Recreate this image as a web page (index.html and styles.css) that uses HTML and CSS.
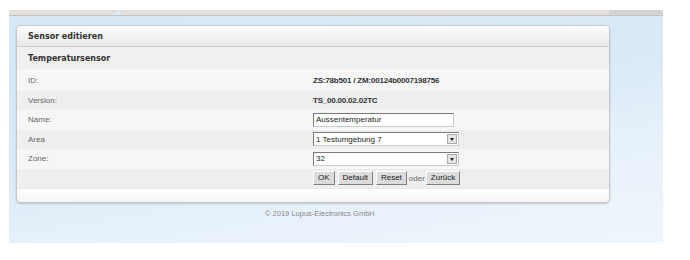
FILE: index.html
```html
<!DOCTYPE html>
<html>
<head>
<meta charset="utf-8">
<link rel="stylesheet" href="styles.css">
</head>
<body>
<div class="page">
  <div class="topbar"><span class="notch"></span><span class="topright"></span></div>
  <div class="bg">
    <div class="panel">
      <div class="ph">Sensor editieren</div>
      <div class="sub">Temperatursensor</div>
      <div class="row light"><span class="lbl">ID:</span><span class="val b">ZS:78b501 / ZM:00124b0007198756</span></div>
      <div class="row dark"><span class="lbl">Version:</span><span class="val b">TS_00.00.02.02TC</span></div>
      <div class="row light"><span class="lbl">Name:</span><span class="val"><span class="inp">Aussentemperatur</span></span></div>
      <div class="row dark"><span class="lbl">Area</span><span class="val"><span class="sel"><span class="seltxt">1 Testumgebung 7</span><span class="arr"></span></span></span></div>
      <div class="row light"><span class="lbl">Zone:</span><span class="val"><span class="sel"><span class="seltxt">32</span><span class="arr"></span></span></span></div>
      <div class="row dark"><span class="lbl"></span><span class="val btns"><span class="btn">OK</span><span class="btn">Default</span><span class="btn">Reset</span><span class="oder">oder</span><span class="btn">Zurück</span></span></div>
      <div class="pfoot"></div>
    </div>
    <div class="footer">© 2019 Lupus-Electronics GmbH</div>
  </div>
</div>
</body>
</html>
```
FILE: styles.css
```css
html, body { margin: 0; padding: 0; background: #fff; font-family: "Liberation Sans", Arial, sans-serif; }
.page { width: 654px; margin-left: 9px; padding-top: 10px; }
.topbar { height: 5px; background: #e3e0dc; border-bottom: 1px solid #c4c4c4; position: relative; }
.notch { position: absolute; left: 104px; top: 0; width: 0; height: 0; border-left: 5px solid transparent; border-right: 5px solid transparent; border-bottom: 5px solid #dcebf7; }
.topright { position: absolute; right: 0; top: 0; width: 54px; height: 5px; background: #d3d3d3; }
.bg { height: 227px; background: linear-gradient(170deg, #d6e8f6 0%, #daeaf7 45%, #e7f1fa 70%, #eff6fc 100%); padding: 9px 0 0 7px; box-sizing: border-box; }
.panel { width: 592px; border: 1px solid #c8c8c8; border-radius: 5px; background: #f2f2f2; box-shadow: 0 1px 2px rgba(0,0,0,0.18); overflow: hidden; font-size: 8px; color: #555; }
.ph { height: 21px; line-height: 21px; padding-left: 11px; font-family: "DejaVu Sans", Verdana, sans-serif; font-weight: bold; font-size: 8px; color: #333; background: linear-gradient(#fcfcfc, #e9e9e9); border-bottom: 1px solid #cfcfcf; box-sizing: border-box; }
.sub { height: 24px; line-height: 24px; padding-left: 11px; font-family: "DejaVu Sans", Verdana, sans-serif; font-weight: bold; font-size: 8px; color: #333; background: #f0f0f0; border-bottom: 1px solid #fafafa; box-sizing: border-box; }
.row { display: flex; align-items: center; height: 19.5px; padding-left: 11px; }
.light { background: #f6f6f6; }
.dark { background: #eeeeee; }
.lbl { width: 285px; color: #666; }
.val { display: flex; align-items: center; color: #333; }
.b { font-weight: bold; font-size: 8px; letter-spacing: -0.2px; color: #333; }
.inp { width: 141px; height: 14px; box-sizing: border-box; border: 1px solid #7a7a7a; border-right-color: #ccc; border-bottom-color: #ccc; background: #fff; font-size: 8px; line-height: 12px; padding-left: 2px; color: #222; }
.sel { width: 146px; height: 14px; box-sizing: border-box; border: 1px solid #7a7a7a; border-right-color: #ccc; border-bottom-color: #ccc; background: #fff; display: flex; align-items: center; justify-content: space-between; font-size: 8px; color: #222; }
.seltxt { padding-left: 2px; }
.arr { width: 10px; height: 10px; margin-right: 1px; background: #e4e4e4; border: 1px solid #aaa; box-sizing: border-box; position: relative; }
.arr::after { content: ""; position: absolute; left: 2px; top: 3px; border-left: 2px solid transparent; border-right: 2px solid transparent; border-top: 3px solid #222; }
.btns { gap: 3px; }
.btn { height: 14px; line-height: 12px; box-sizing: border-box; padding: 0 4px; background: #dcdcdc; border: 1px solid #fff; border-right-color: #808080; border-bottom-color: #808080; font-size: 8px; color: #222; }
.oder { font-size: 8px; color: #666; margin: 0 -2px 0 -1px; }
.pfoot { height: 14px; background: linear-gradient(#ffffff, #f4f4f4); border-top: 1px solid #e8e8e8; box-sizing: border-box; }
.footer { margin-top: 6px; padding-left: 249px; font-size: 7.5px; color: #888; }
```
